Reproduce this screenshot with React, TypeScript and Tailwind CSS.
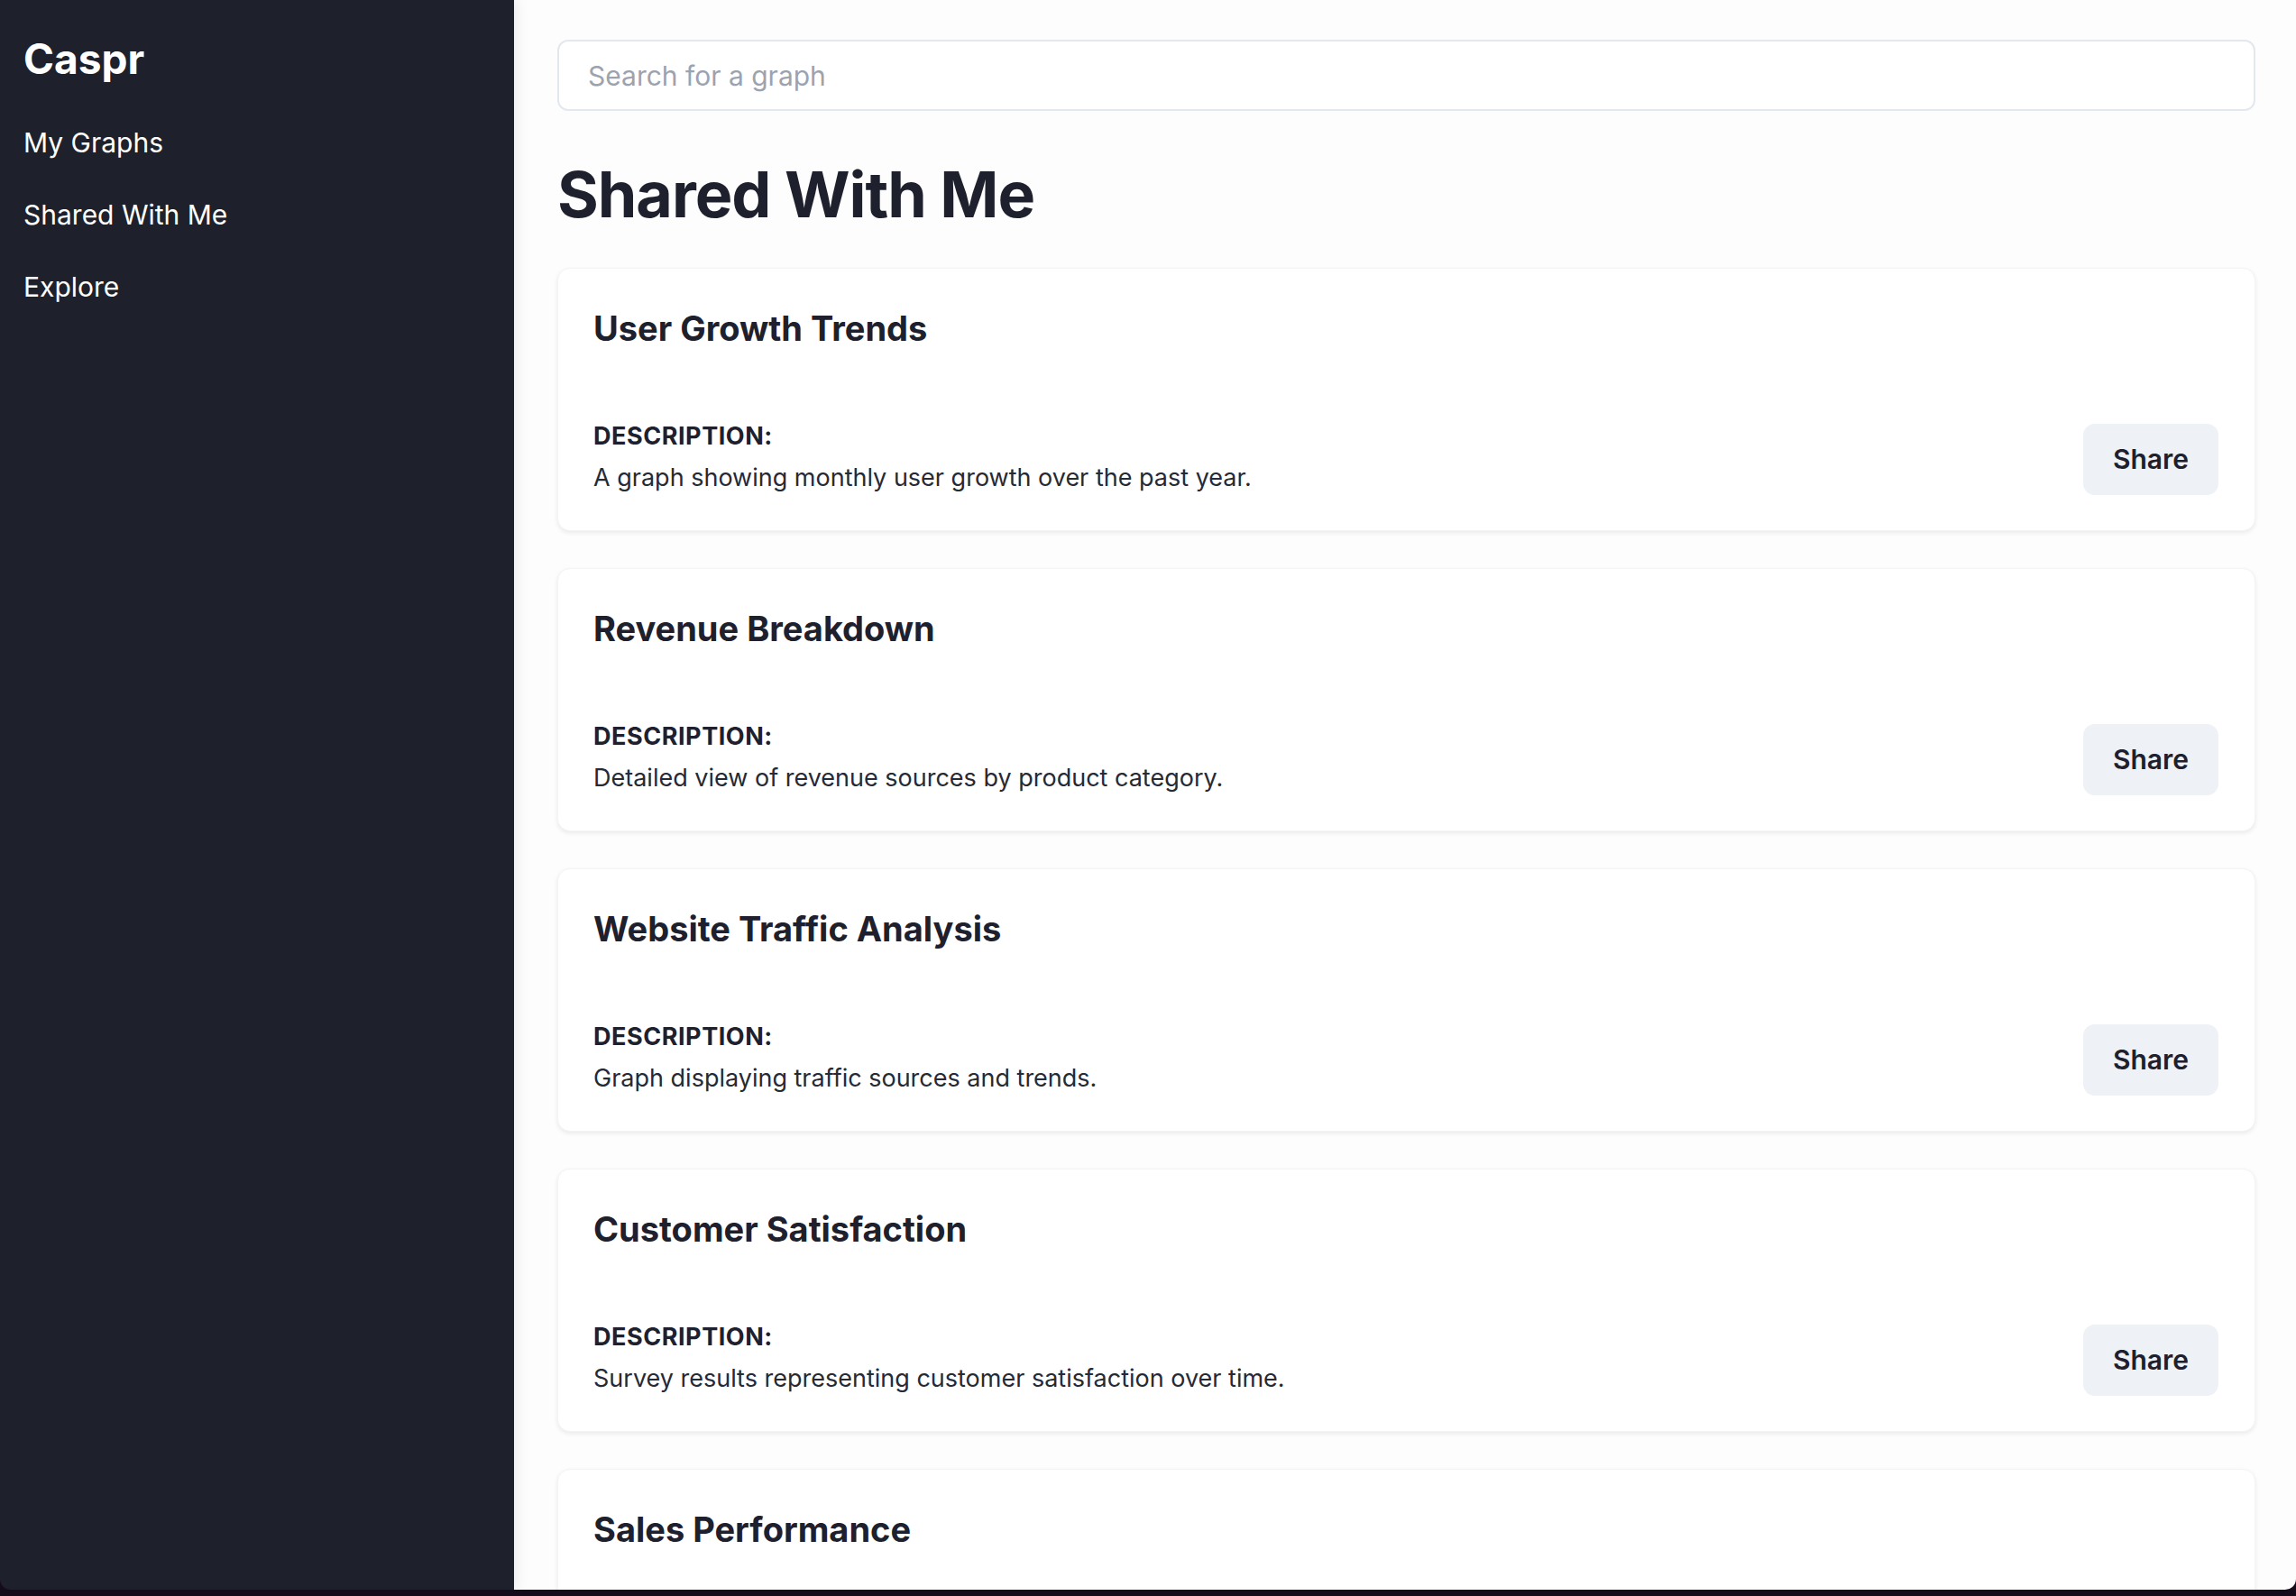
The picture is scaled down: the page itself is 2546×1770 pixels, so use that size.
import React from 'react';

const navItems = ['My Graphs', 'Shared With Me', 'Explore'];

const graphs = [
    { title: 'User Growth Trends', description: 'A graph showing monthly user growth over the past year.' },
    { title: 'Revenue Breakdown', description: 'Detailed view of revenue sources by product category.' },
    { title: 'Website Traffic Analysis', description: 'Graph displaying traffic sources and trends.' },
    { title: 'Customer Satisfaction', description: 'Survey results representing customer satisfaction over time.' },
    { title: 'Sales Performance', description: 'Quarterly sales performance across all regions.' },
];

function GraphCard({ title, description }: { title: string; description: string }) {
    return (
        <section className="h-[292px] shrink-0 rounded-[14px] border border-[#f3f4f6] bg-white pl-[39px] pr-[40px] pt-[40px] pb-[39px] shadow-[0_2px_5px_rgba(0,0,0,0.08)]">
            <h3 className="text-[38px] font-bold leading-[52px] text-[#1e212d]">{title}</h3>
            <div className="mt-[74px] flex items-end justify-between">
                <div>
                    <p className="mb-[7px] text-[27px] font-bold uppercase leading-[39px] tracking-[0.02em] text-[#1e212d]">Description:</p>
                    <p className="text-[27px] leading-[39px] text-[#262a35]">{description}</p>
                </div>
                <button className="h-[79px] rounded-[13px] bg-[#eef1f5] px-[33px] text-[30px] font-semibold text-[#1e212d]">
                    Share
                </button>
            </div>
        </section>
    );
}

export default function App() {
    return (
        <div className="h-[1770px] w-full bg-[#140c1b] font-['Inter',sans-serif]">
            <div className="flex h-[1763px] overflow-hidden rounded-b-[12px]">
                {/* Sidebar */}
                <aside className="relative z-10 w-[570px] shrink-0 bg-[#1e212c] pl-[26px] pt-[36px] text-white shadow-[3px_0_14px_rgba(0,0,0,0.07)]">
                    <h1 className="text-[46px] font-bold leading-[58px]">Caspr</h1>
                    <nav className="mt-[24px] flex flex-col">
                        {navItems.map(item => (
                            <a key={item} href="#" className="block py-[17px] text-[30px] leading-[46px] text-white">
                                {item}
                            </a>
                        ))}
                    </nav>
                </aside>

                {/* Main content */}
                <main className="flex-1 overflow-hidden bg-[#fdfdfd] pl-[48px] pr-[45px] pt-[44px]">
                    <input
                        type="text"
                        placeholder="Search for a graph"
                        className="h-[79px] w-full rounded-[12px] border-2 border-[#e3e8ef] bg-white px-[32px] text-[30px] text-[#1e212d] placeholder:text-[#9ca3af] focus:outline-none"
                    />
                    <h2 className="mt-[56px] text-[70px] font-bold leading-[74px] tracking-[-0.015em] text-[#1e212d]">Shared With Me</h2>
                    <div className="mt-[44px] flex flex-col gap-[41px]">
                        {graphs.map(g => (
                            <GraphCard key={g.title} title={g.title} description={g.description} />
                        ))}
                    </div>
                </main>
            </div>
        </div>
    );
}
